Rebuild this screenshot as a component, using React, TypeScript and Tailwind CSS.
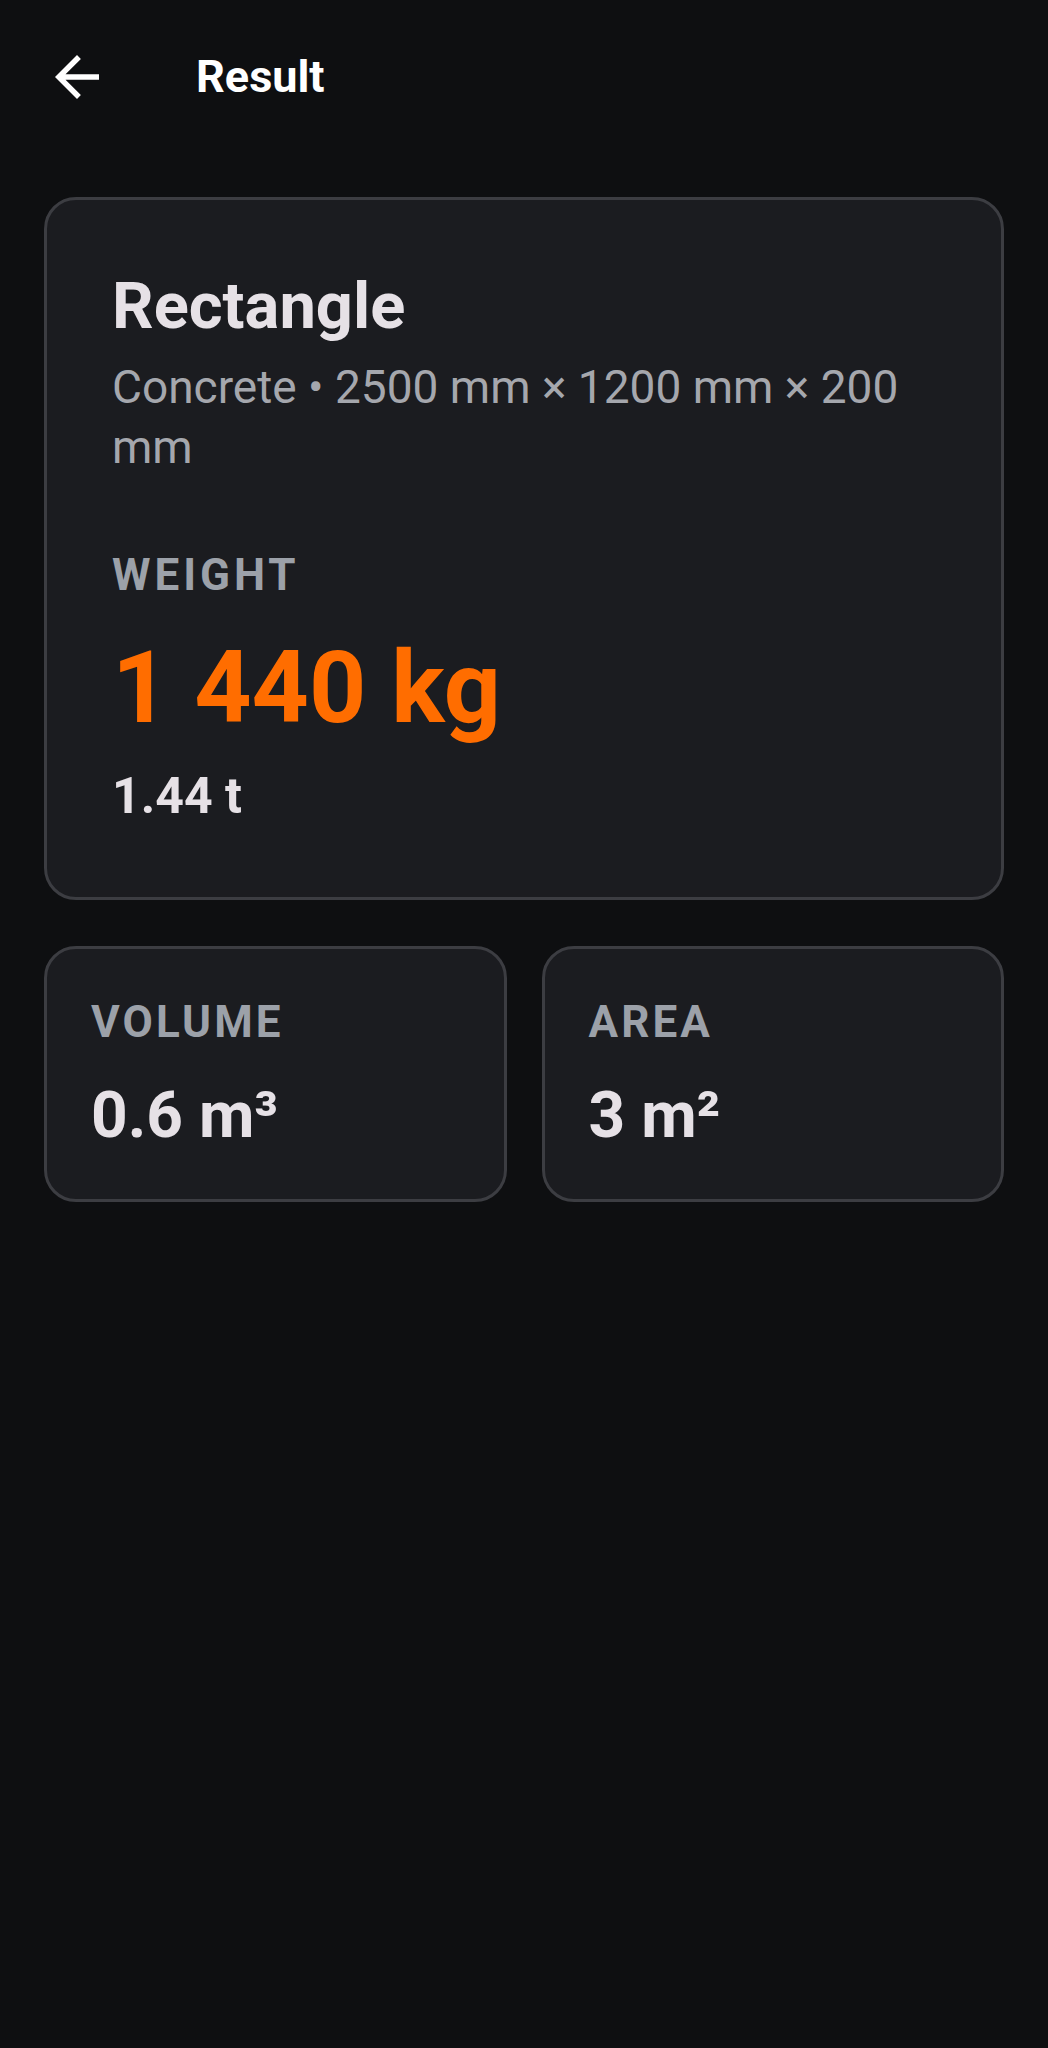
import React from "react";

const stats = [
  { label: "VOLUME", value: "0.6 m³" },
  { label: "AREA", value: "3 m²" },
];

function BackArrow() {
  return (
    <svg width="66" height="66" viewBox="0 0 24 24" fill="none">
      <path d="M20 11H7.83l5.59-5.59L12 4l-8 8 8 8 1.41-1.41L7.83 13H20v-2z" fill="white" />
    </svg>
  );
}

export default function App() {
  return (
    <div className="min-h-[2048px] bg-[#0e0f11] pt-[44px] font-[Roboto,sans-serif]">
      {/* Top bar */}
      <div className="flex items-center h-[66px] px-[44px]">
        <button className="w-[66px] h-[66px] flex items-center justify-center shrink-0">
          <BackArrow />
        </button>
        <h1 className="ml-[86px] text-[45px] leading-[52px] font-bold text-white">Result</h1>
      </div>

      <div className="px-[44px] mt-[87px]">
        {/* Main result card */}
        <div className="bg-[#1b1c20] border-[3px] border-[#3c3d42] rounded-[32px] px-[65px] pt-[66px] pb-[71px] flex flex-col">
          <h2 className="text-[65px] leading-[80px] font-bold text-[#e6e1e6]">Rectangle</h2>
          <p className="mt-[11px] text-[46px] leading-[60px] text-[#a5a7ad]">
            Concrete • 2500 mm × 1200 mm × 200 mm
          </p>
          <span className="mt-[72px] text-[44px] leading-[52px] font-bold tracking-[0.09em] text-[#9ca1a9]">
            WEIGHT
          </span>
          <span className="mt-[29px] text-[100px] leading-[116px] font-bold text-[#ff6d00]">1 440 kg</span>
          <span className="mt-[20px] text-[50px] leading-[60px] font-bold text-[#e6e1e6]">1.44 t</span>
        </div>

        {/* Secondary stats */}
        <div className="mt-[46px] grid grid-cols-2 gap-[35px]">
          {stats.map((s) => (
            <div
              key={s.label}
              className="bg-[#1b1c20] border-[3px] border-[#3c3d42] rounded-[32px] pl-[44px] pr-6 pt-[47px] pb-[45px] flex flex-col"
            >
              <span className="text-[44px] leading-[52px] font-bold tracking-[0.07em] text-[#9ca1a9]">
                {s.label}
              </span>
              <span className="mt-[30px] text-[64px] leading-[76px] font-bold text-[#e6e1e6]">{s.value}</span>
            </div>
          ))}
        </div>
      </div>
    </div>
  );
}
